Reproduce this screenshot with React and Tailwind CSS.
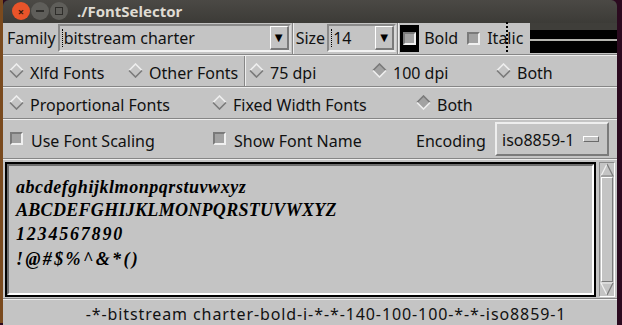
import React from "react";

const ui = { fontFamily: '"Noto Sans", "Open Sans", sans-serif' };
const sample = { fontFamily: '"Liberation Serif", "DejaVu Serif", serif' };

function Diamond({ on }) {
  return (
    <svg width="15" height="15" viewBox="0 0 15 15" className="shrink-0">
      <polygon points="7.5,1 14,7.5 7.5,14 1,7.5" fill={on ? "#a2a2a2" : "#c4c4c4"} />
      <polyline points="1,7.5 7.5,1 14,7.5" fill="none" stroke={on ? "#7a7a7a" : "#eeeeee"} strokeWidth="1.6" />
      <polyline points="1,7.5 7.5,14 14,7.5" fill="none" stroke={on ? "#eeeeee" : "#7a7a7a"} strokeWidth="1.6" />
    </svg>
  );
}

function Check() {
  return (
    <span className="block h-[13px] w-[13px] shrink-0 border-2 border-t-[#7a7a7a] border-l-[#7a7a7a] border-b-[#f0f0f0] border-r-[#f0f0f0] bg-[#a2a2a2]" />
  );
}

function Radio({ on, label, className = "" }) {
  return (
    <div className={`flex items-center gap-[6px] ${className}`}>
      <Diamond on={on} />
      <span className="pt-[4px]">{label}</span>
    </div>
  );
}

function Sep() {
  return <div className="h-[2px] border-t border-t-[#868686] border-b border-b-[#eeeeee]" />;
}

function Combo({ value, width }) {
  return (
    <div
      className={`flex h-[28px] items-center border-t-2 border-l-2 border-t-[#8a8a8a] border-l-[#8a8a8a] border-b-2 border-r-2 border-b-[#f2f2f2] border-r-[#d8d8d8] ${width}`}
    >
      <span className="ml-[2px] h-[18px] border-l border-dotted border-black" />
      <span className="ml-[1px] flex-1 truncate">{value}</span>
      <span className="flex h-[24px] w-[19px] items-center justify-center border-t border-l border-t-white border-l-white border-b-2 border-r-2 border-b-[#7a7a7a] border-r-[#7a7a7a] text-[13px] leading-none text-black">
        ▼
      </span>
    </div>
  );
}

export default function App() {
  return (
    <div className="flex h-[325px] w-[622px] flex-col bg-[#2b0a1f]" style={ui}>
      <div className="flex h-[323px]">
        <div className="w-[3px] bg-[#7a4a1e]" />
        <div className="flex w-[614px] flex-col">
          {/* title bar */}
          <div className="flex h-[25px] items-center rounded-t-[6px] bg-gradient-to-b from-[#4b4945] to-[#3c3b37] pl-[9px]">
            <div className="flex items-center gap-[1px]">
              <span className="flex h-[18px] w-[18px] items-center justify-center rounded-full bg-[#e9542a] text-[11px] font-bold leading-none text-[#3a1a0c]">
                ×
              </span>
              <span className="flex h-[18px] w-[18px] items-center justify-center rounded-full bg-[#5f5e5a]">
                <span className="h-[2px] w-[8px] bg-[#2e2d2a]" />
              </span>
              <span className="flex h-[18px] w-[18px] items-center justify-center rounded-full bg-[#5f5e5a]">
                <span className="h-[8px] w-[8px] border-[1.5px] border-[#2e2d2a]" />
              </span>
            </div>
            <span className="ml-[9px] text-[15px] font-bold text-[#dfdbd2]">./FontSelector</span>
          </div>

          {/* body */}
          <div className="flex flex-1 flex-col bg-[#c4c4c4] text-[16px] text-[#111]">
            {/* row 1 */}
            <div className="flex h-[31px] items-center">
              <span className="ml-[4px] mr-[2px]">Family</span>
              <Combo value="bitstream charter" width="w-[233px]" />
              <div className="mx-[1px] h-[31px] w-[2px] border-l border-l-[#868686] border-r border-r-[#eeeeee]" />
              <span className="ml-[1px] mr-[2px]">Size</span>
              <Combo value="14" width="w-[69px]" />
              <div className="mx-[1px] h-[31px] w-[2px] border-l border-l-[#868686] border-r border-r-[#eeeeee]" />
              <div className="flex h-[27px] w-[19px] items-center justify-center bg-black">
                <Check />
              </div>
              <span className="ml-[5px]">Bold</span>
              <span className="ml-[9px]">
                <Check />
              </span>
              <span className="relative ml-[7px]">
                Ital
                <span className="absolute left-[19px] top-[-4px] h-[30px] border-l-2 border-dotted border-black" />
                ic
              </span>
              <div className="ml-[7px] flex h-[31px] flex-1 flex-col bg-[#3f3e3a]">
                <div className="mt-[7px] h-[9px] bg-black" />
                <div className="h-[2px] bg-[#b5b5b0]" />
                <div className="h-[12px] bg-black" />
                <div className="flex-1 bg-[#c4c4c4]" />
              </div>
            </div>
            <Sep />

            {/* row 2 */}
            <div className="flex h-[30px] items-center">
              <Radio label="Xlfd Fonts" className="ml-[6px] w-[119px]" />
              <Radio label="Other Fonts" className="w-[116px]" />
              <div className="mr-[3px] h-[30px] w-[2px] border-l border-l-[#868686] border-r border-r-[#eeeeee]" />
              <Radio label="75 dpi" className="w-[123px]" />
              <Radio on label="100 dpi" className="w-[124px]" />
              <Radio label="Both" />
            </div>
            <Sep />

            {/* row 3 */}
            <div className="flex h-[30px] items-center">
              <Radio label="Proportional Fonts" className="ml-[6px] w-[203px]" />
              <Radio label="Fixed Width Fonts" className="w-[204px]" />
              <Radio on label="Both" />
            </div>
            <Sep />

            {/* row 4 */}
            <div className="flex h-[38px] items-center">
              <div className="ml-[7px] flex w-[203px] items-center gap-[8px]">
                <Check />
                <span className="pt-[4px]">Use Font Scaling</span>
              </div>
              <div className="flex w-[203px] items-center gap-[8px]">
                <Check />
                <span className="pt-[4px]">Show Font Name</span>
              </div>
              <span className="w-[79px] pt-[4px]">Encoding</span>
              <div className="flex h-[34px] w-[114px] items-center border-2 border-t-[#eeeeee] border-l-[#eeeeee] border-b-[#7a7a7a] border-r-[#7a7a7a] pl-[5px]">
                <span className="flex-1 pt-[2px]">iso8859-1</span>
                <span className="mr-[8px] h-[6px] w-[16px] border border-t-white border-l-white border-b-[#6a6a6a] border-r-[#6a6a6a] bg-[#c4c4c4]" />
              </div>
            </div>
            <Sep />

            {/* text area + scrollbar */}
            <div className="mt-[2px] flex h-[135px] items-stretch">
              <div className="ml-[2px] flex-1 border-2 border-black">
                <div className="h-full border-2 border-t-[#6e6e6e] border-l-[#6e6e6e] border-b-white border-r-white">
                  <div className="pl-[7px] pt-[10px] text-[18px] font-bold italic leading-[23.7px] tracking-[0.55px] text-black" style={sample}>
                    <div>abcdefghijklmonpqrstuvwxyz</div>
                    <div className="tracking-[0.3px]">ABCDEFGHIJKLMONPQRSTUVWXYZ</div>
                    <div className="tracking-[1.8px]">1234567890</div>
                    <div className="mt-[1px] tracking-[2.4px]">!@#$%^&amp;*()</div>
                  </div>
                </div>
              </div>
              <div className="ml-[3px] mr-[2px] flex w-[16px] flex-col border border-t-[#8a8a8a] border-l-[#8a8a8a] border-b-white border-r-white bg-[#c4c4c4]">
                <svg width="14" height="14" viewBox="0 0 14 14">
                  <polygon points="7,1 13,13 1,13" fill="#c4c4c4" />
                  <polyline points="1,13 7,1" fill="none" stroke="#f0f0f0" strokeWidth="1.2" />
                  <polyline points="7,1 13,13 1,13" fill="none" stroke="#7a7a7a" strokeWidth="1.2" />
                </svg>
                <div className="mx-[1px] flex-1 border border-t-white border-l-white border-b-[#7a7a7a] border-r-[#7a7a7a]" />
                <svg width="14" height="14" viewBox="0 0 14 14">
                  <polygon points="1,1 13,1 7,13" fill="#c4c4c4" />
                  <polyline points="13,1 1,1 7,13" fill="none" stroke="#f0f0f0" strokeWidth="1.2" />
                  <polyline points="7,13 13,1" fill="none" stroke="#7a7a7a" strokeWidth="1.2" />
                </svg>
              </div>
            </div>
            <div className="mt-[1px]">
              <Sep />
            </div>

            {/* status */}
            <div className="flex flex-1 items-center justify-center pl-[32px] pt-[2px] tracking-[0.9px]">
              -*-bitstream charter-bold-i-*-*-140-100-100-*-*-iso8859-1
            </div>
          </div>
        </div>
        <div className="flex-1 bg-[#2b0a1f]" />
      </div>
    </div>
  );
}
